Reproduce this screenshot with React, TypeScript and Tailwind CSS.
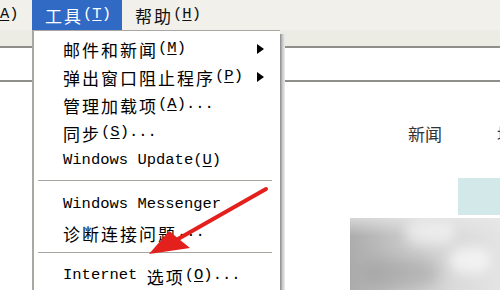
import React from "react";

const cjk = "font-['Noto_Sans_CJK_SC',sans-serif] text-[17px] tracking-[2px] leading-none";
const lat = "font-['Liberation_Mono',monospace] text-[15.5px] leading-none";

function C({ children }: { children: React.ReactNode }) {
  return <span className={cjk}>{children}</span>;
}

function L({ children }: { children: React.ReactNode }) {
  return <span className={lat}>{children}</span>;
}

function Key({ k }: { k: string }) {
  return (
    <L>
      (<span className="underline underline-offset-2">{k}</span>)
    </L>
  );
}

function Item({ children, sub }: { children: React.ReactNode; sub?: boolean }) {
  return (
    <div className="h-[28px] flex items-center pl-[29px] pr-[14px] text-black">
      <div className="flex-1 flex items-center whitespace-pre">{children}</div>
      {sub && (
        <svg width="7" height="10" viewBox="0 0 7 10" className="mr-[2px]">
          <path d="M0 0 L7 5 L0 10 Z" fill="#000" />
        </svg>
      )}
    </div>
  );
}

function Sep({ h }: { h: string }) {
  return (
    <div className={`${h} flex items-start pt-[5px] pl-[4px] pr-[8px]`}>
      <div className="h-[2px] w-full border-t border-[#a7a6a0] border-b-white" />
    </div>
  );
}

export default function App() {
  return (
    <div className="relative w-[500px] h-[290px] overflow-hidden bg-white">
      {/* menubar */}
      <div className="h-[30px] flex items-stretch bg-[#f1f0eb] text-[#111]">
        <div className="w-[32px] flex items-center">
          <L>
            <span className="underline underline-offset-2">A</span>)
          </L>
        </div>
        <div className="w-[90px] bg-[#316ac5] text-white flex items-center pl-[13px]">
          <C>工具</C>
          <Key k="T" />
        </div>
        <div className="flex items-center pl-[13px]">
          <C>帮助</C>
          <Key k="H" />
        </div>
      </div>

      {/* toolbar / address bands */}
      <div className="h-[16px] bg-[#ecebe4]" />
      <div className="h-[2px] bg-[#8e8e8a]" />
      <div className="h-[32px] bg-white" />
      <div className="h-[2px] bg-[#8e8e8a]" />

      {/* page content */}
      <div className="flex flex-col">
        <div className="h-[42px]" />
        <div className="flex items-center h-[18px] pl-[408px] gap-[55px] text-[#333] whitespace-nowrap">
          <span className="font-['Noto_Sans_CJK_SC',sans-serif] text-[17px] leading-none">新闻</span>
          <span className="font-['Noto_Sans_CJK_SC',sans-serif] text-[17px] leading-none">地图</span>
        </div>
        <div className="h-[36px]" />
        <div className="flex justify-end">
          <div className="w-[42px] h-[37px] bg-[#d3e8e9]" />
        </div>
        <div className="h-[3px]" />
        <div className="ml-[350px] h-[80px] relative overflow-hidden bg-linear-to-r from-[#acacac] via-[#d4d4d4] to-[#e4e4e4]">
          <div className="absolute left-[0px] top-[0px] w-[150px] h-[18px] bg-linear-to-b from-[#e8e8e8]/70 to-transparent" />
          <div className="absolute left-[55px] top-[4px] w-[50px] h-[22px] rounded-full bg-white/50 blur-[6px]" />
          <div className="absolute left-[100px] top-[30px] w-[40px] h-[25px] rounded-full bg-white/60 blur-[6px]" />
          <div className="absolute left-[10px] top-[40px] w-[80px] h-[30px] rounded-full bg-[#9a9a9a]/50 blur-[8px]" />
        </div>
      </div>

      {/* dropdown menu */}
      <div className="absolute left-[32px] top-[30px] w-[253px] h-[270px] flex">
        <div className="w-[248px] bg-white border-l-2 border-t border-[#a9a8a3] flex flex-col pt-[4px]">
          <Item sub>
            <C>邮件和新闻</C>
            <Key k="M" />
          </Item>
          <Item sub>
            <C>弹出窗口阻止程序</C>
            <Key k="P" />
          </Item>
          <Item>
            <C>管理加载项</C>
            <Key k="A" />
            <L>...</L>
          </Item>
          <Item>
            <C>同步</C>
            <Key k="S" />
            <L>...</L>
          </Item>
          <Item>
            <L>Windows Update</L>
            <Key k="U" />
          </Item>
          <Sep h="h-[16px]" />
          <Item>
            <L>Windows Messenger</L>
          </Item>
          <Item>
            <C>诊断连接问题</C>
            <L>...</L>
          </Item>
          <Sep h="h-[15px]" />
          <Item>
            <L>{"Internet "}</L>
            <C>选项</C>
            <Key k="O" />
            <L>...</L>
          </Item>
        </div>
        <div className="w-[5px] mt-[4px] bg-linear-to-r from-[#8a8a8a] via-[#c8c8c8] to-[#eeeeee]" />
      </div>

      {/* red annotation arrow */}
      <svg className="absolute left-0 top-0" width="500" height="290" viewBox="0 0 500 290">
        <line x1="266" y1="189" x2="178" y2="239" stroke="#e3201b" strokeWidth="4" strokeLinecap="round" />
        <path d="M149 254 L169 231 L190 248 Z" fill="#e3201b" />
      </svg>
    </div>
  );
}
